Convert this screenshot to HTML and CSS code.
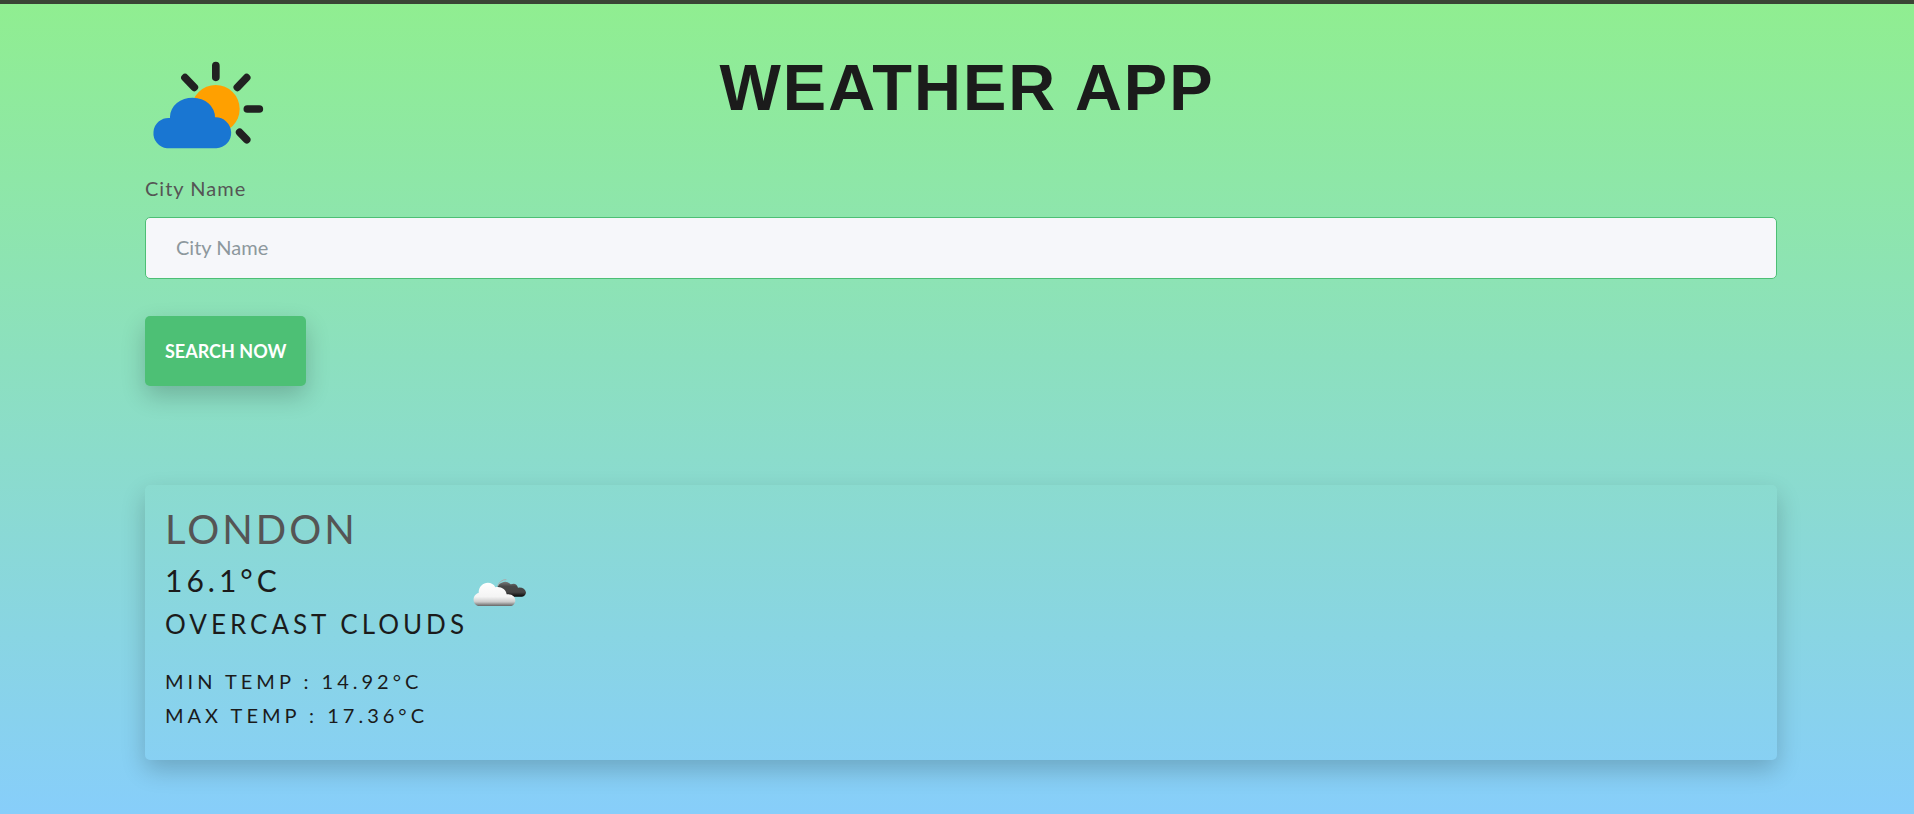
FILE: index.html
```html
<!DOCTYPE html>
<html lang="en">
<head>
<meta charset="utf-8">
<title>Weather App</title>
<link rel="stylesheet" href="styles.css">
</head>
<body>
<div class="page">
  <header class="header">
    <svg class="logo" viewBox="45 60 375 270" aria-hidden="true">
      <circle cx="257" cy="207" r="72" fill="#ffa000"/>
      <g stroke="#212121" stroke-width="23" stroke-linecap="round">
        <path d="M257.500 77V112M165 113L193 142M350 113L322 142M352 207H388M329 277L350 299"/>
      </g>
      <path fill="#1976d2" d="M114 324A45 45.500 0 0 1 123 233V229A67.500 58 0 0 1 258 231A46 46 0 0 1 262 324Z" transform="translate(-3 1)"/>
    </svg>
    <h1 class="title">WEATHER APP</h1>
  </header>
  <main>
    <form class="search">
      <label class="label" for="city">City Name</label>
      <input class="input" id="city" type="text" placeholder="City Name">
      <button class="button" type="button">SEARCH NOW</button>
    </form>
    <section class="card">
      <div class="current">
        <div>
          <h2 class="city">LONDON</h2>
          <p class="temp">16.1°C</p>
          <p class="summary">OVERCAST CLOUDS</p>
        </div>
        <svg class="clouds" viewBox="30 30 168 100" aria-hidden="true">
          <defs>
            <linearGradient id="dark" x1="0" y1="0" x2="0" y2="1"><stop offset="0" stop-color="#777"/><stop offset=".3" stop-color="#484848"/><stop offset=".7" stop-color="#444"/><stop offset="1" stop-color="#080808"/></linearGradient>
            <linearGradient id="light" x1="0" y1="0" x2="0" y2="1"><stop offset="0" stop-color="#fff"/><stop offset=".6" stop-color="#f4f4f4"/><stop offset=".82" stop-color="#ccc"/><stop offset="1" stop-color="#666"/></linearGradient>
          </defs>
          <path fill="url(#dark)" d="M105 72A24 24 0 0 1 146 57Q163 50 168 67Q188 65 192 81Q191 93 180 94H130Z"/>
          <path fill="none" stroke="#aaa" stroke-width="3" d="M107 62Q115 42 133 43"/>
          <path fill="url(#light)" d="M48 122C29 117 31 87 50 83C49 59 73 45 91 56Q97 59 100 66C116 62 132 72 134 87C164 84 167 115 148 122Z"/>
        </svg>
      </div>
      <p class="range">MIN TEMP : 14.92°C</p>
      <p class="range">MAX TEMP : 17.36°C</p>
    </section>
  </main>
</div>
</body>
</html>
```
FILE: styles.css
```css
* { box-sizing: border-box; }
body {
  margin: 0;
  min-height: 100vh;
  border-top: 4px solid #3a4434;
  background: linear-gradient(#90ee90, #87cefa);
  color: #1b1b1b;
  font-family: Lato, sans-serif;
}
.page { padding: 56px 137px 54px 145px; }
.header {
  display: grid;
  grid-template-columns: 125px 1fr 113px;
  align-items: start;
}
.logo { width: 125px; height: 90px; }
.title {
  margin: 0;
  font: 700 65px/56px "Liberation Sans", sans-serif;
  letter-spacing: 2px;
  text-align: center;
}
.search { display: flex; flex-direction: column; align-items: flex-start; }
.label {
  margin: 22px 0 13px;
  font-size: 20px;
  line-height: 32px;
  letter-spacing: 1px;
  color: #555;
}
.input {
  width: 100%;
  height: 62px;
  padding: 0 30px 2px;
  border: 1px solid #4dbf75;
  border-radius: 5px;
  background: #f6f7fa;
  font: 400 20px/30px Lato, sans-serif;
}
.input::placeholder { color: #8d989d; opacity: 1; }
.button {
  height: 70px;
  margin-top: 37px;
  padding: 0 20px;
  border: 0;
  border-radius: 5px;
  background: #4dc075;
  box-shadow: 0 10px 25px rgba(0, 0, 0, .2);
  color: #fff;
  font: 700 18px/24px Lato, sans-serif;
}
.card {
  margin-top: 99px;
  padding: 20px 20px 28px;
  border-radius: 5px;
  box-shadow: 0 10px 25px rgba(0, 0, 0, .2);
  letter-spacing: 4px;
}
.current { display: flex; align-items: center; gap: 4px; margin-bottom: 23px; }
.city { margin: 0; font-weight: 400; font-size: 40px; line-height: 48px; letter-spacing: 3px; color: #555; }
.temp { margin: 0; font-size: 30px; line-height: 54px; }
.summary { margin: 0; font-size: 26px; line-height: 34px; }
.clouds { width: 56px; height: 34px; margin-top: 70px; align-self: flex-start; }
.range { margin: 0; font-size: 20px; line-height: 34px; }
```
